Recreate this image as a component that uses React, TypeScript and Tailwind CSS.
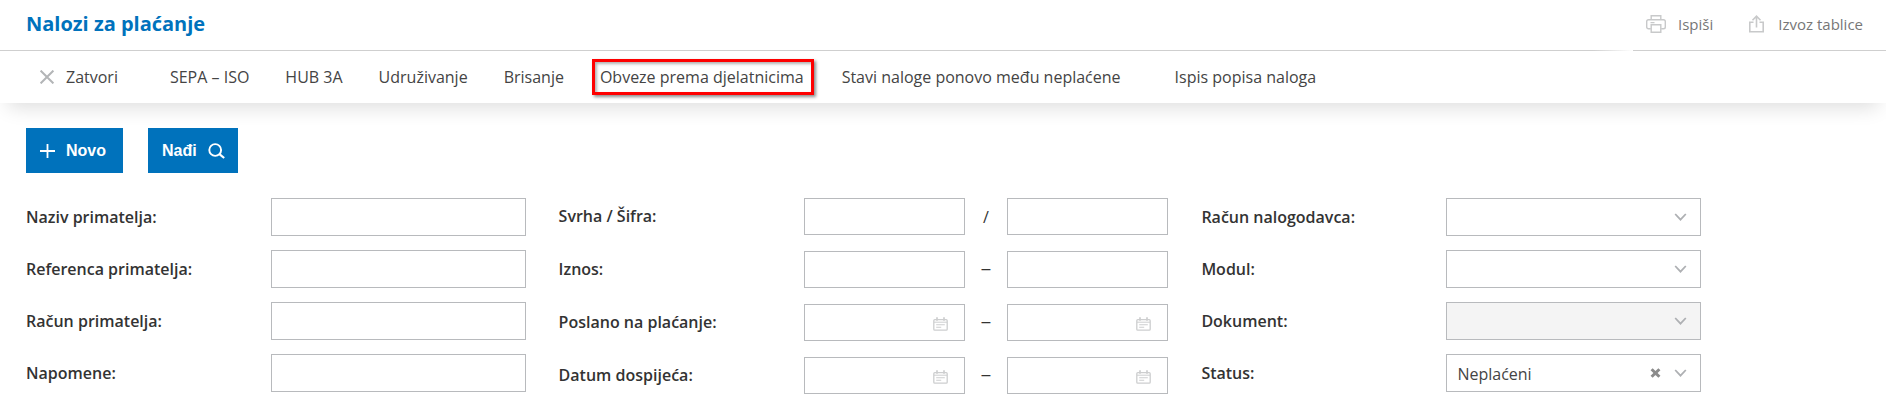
import type { ReactNode } from "react"
import clsx from "clsx"

type FieldProps = {
    id: string
    label: string
    children: ReactNode
}

type ActionProps = {
    label: string
    className?: string
    marked?: boolean
}

const inputClass = "w-full min-w-0 border border-[#b8babd] bg-white px-3 text-base text-[#444] outline-none"

const PrinterIcon = () => (
    <svg width="20" height="18" viewBox="0 0 20 18" fill="none" stroke="#c8c9ca" strokeWidth="1.4">
        <path d="M5.2 4.8V.7h9.6v4.1" />
        <path d="M4.8 13.8H2.5c-1 0-1.8-.8-1.8-1.8V6.6c0-1 .8-1.8 1.8-1.8h15c1 0 1.8.8 1.8 1.8V12c0 1-.8 1.8-1.8 1.8h-2.3" />
        <path d="M5.2 9.7h9.6v7.6H5.2zM4.5 7.6h4" />
    </svg>
)

const ExportIcon = () => (
    <svg width="15" height="18" viewBox="0 0 15 18" fill="none" stroke="#c8c9ca" strokeWidth="1.6">
        <path d="M4.5 7.3H.8v9.5h13.4V7.3h-3.7M7.5 12.5V2M3.5 5.2l4-4 4 4" />
    </svg>
)

const CloseIcon = () => (
    <svg width="14" height="14" viewBox="0 0 14 14" fill="none" stroke="#b3b5b7" strokeWidth="2">
        <path d="m.6.6 12.8 12.8M13.4.6.6 13.4" />
    </svg>
)

const PlusIcon = () => (
    <svg width="15" height="14" viewBox="0 0 15 14" fill="none" stroke="#fff" strokeWidth="1.8">
        <path d="M0 7h15M7.5 0v14" />
    </svg>
)

const SearchIcon = () => (
    <svg width="18" height="16" viewBox="0 0 18 16" fill="none" stroke="#fff" strokeWidth="1.9">
        <circle cx="7.2" cy="7" r="5.9" />
        <path d="m11.4 11.1 4.8 3.9" strokeWidth="2.2" />
    </svg>
)

const CalendarIcon = () => (
    <svg className="pointer-events-none absolute right-[17px] bottom-2.5" width="15" height="14" viewBox="0 0 15 14" fill="none" stroke="#cdcecf">
        <rect x=".8" y="2.7" width="13.4" height="10.5" rx="1" strokeWidth="1.3" />
        <path d="M1 5.2h13" />
        <path d="M4 .3v3.4M11 .3v3.4" strokeWidth="1.7" />
        <path d="M3.2 7.8h8.6M3.2 10.2h5" strokeWidth="1.1" />
    </svg>
)

const ChevronIcon = () => (
    <svg className="pointer-events-none absolute top-1/2 right-3.5 -translate-y-1/2" width="13" height="8" viewBox="0 0 13 8" fill="none" stroke="#aeb0b3" strokeWidth="1.8">
        <path d="m1.2 1 5.3 5.6L11.8 1" />
    </svg>
)

const Action = ({ label, className, marked }: ActionProps) => (
    <button type="button" className={clsx("relative cursor-pointer whitespace-nowrap", className)}>
        {label}
        {marked && <span className="absolute -inset-y-1.5 -right-2.5 -left-2 border-3 border-[#fe0000] shadow-[2px_2px_3px_rgba(0,0,0,0.45),inset_2px_2px_3px_rgba(0,0,0,0.3)]" />}
    </button>
)

const Field = ({ id, label, children }: FieldProps) => (
    <div className="flex items-center">
        <label htmlFor={id} className="w-[245px] shrink-0 pb-px font-semibold">{label}</label>
        {children}
    </div>
)

const TextField = ({ id, label }: { id: string, label: string }) => (
    <Field id={id} label={label}>
        <input id={id} type="text" className={clsx(inputClass, "h-[38px]")} />
    </Field>
)

const RangeField = ({ id, label, separator = "–", date }: { id: string, label: string, separator?: string, date?: boolean }) => (
    <Field id={id} label={label}>
        <div className="relative flex-1">
            <input id={id} type="text" className={clsx(inputClass, "block h-[37px]")} />
            {date && <CalendarIcon />}
        </div>
        <span className={clsx("w-[42px] text-center", separator === "–" && "pb-0.5 font-['Liberation_Sans',sans-serif]")}>{separator}</span>
        <div className="relative flex-1">
            <input aria-label={label} type="text" className={clsx(inputClass, "block h-[37px]")} />
            {date && <CalendarIcon />}
        </div>
    </Field>
)

const SelectField = ({ id, label, value, disabled }: { id: string, label: string, value?: string, disabled?: boolean }) => (
    <Field id={id} label={label}>
        <div className="relative flex-1">
            <select id={id} disabled={disabled} className={clsx(inputClass, "block h-[38px] appearance-none pt-0.5 pl-2.5 disabled:bg-[#f4f4f4] disabled:opacity-100")}>
                <option>{value}</option>
            </select>
            {value && (
                <button type="button" aria-label="Ukloni" className="absolute top-1/2 right-10 -translate-y-1/2">
                    <svg width="11" height="10" viewBox="0 0 11 10" stroke="#8b8b8b" strokeWidth="3">
                        <path d="m1.6 1.2 7.8 7.6M9.4 1.2 1.6 8.8" />
                    </svg>
                </button>
            )}
            <ChevronIcon />
        </div>
    </Field>
)

const App = () => {
    return (
        <div className="min-h-screen bg-white font-['Open_Sans',sans-serif] text-base text-[#333]">
            <header className="flex h-[50px] items-center justify-between pr-[23px] pl-[26px]">
                <h1 className="pb-0.5 text-xl font-bold text-[#0072bc]">Nalozi za plaćanje</h1>
                <div className="flex items-center gap-9 pb-0.5 text-[15px] text-[#777]">
                    <button type="button" className="flex cursor-pointer items-center gap-3">
                        <PrinterIcon />
                        Ispiši
                    </button>
                    <button type="button" className="flex cursor-pointer items-center gap-3.5">
                        <ExportIcon />
                        Izvoz tablice
                    </button>
                </div>
            </header>
            <div className="flex h-px">
                <div className="flex-1 bg-[#cfcfcf]" />
                <div className="w-10 bg-linear-to-r from-[#cfcfcf] to-white" />
                <div className="w-[253px] bg-[#cfcfcf]" />
            </div>
            <nav className="flex h-[52px] items-center gap-9 pl-10 text-[#444] shadow-[0_12px_20px_-8px_rgba(0,0,0,0.14)]">
                <button type="button" className="flex cursor-pointer items-center gap-3">
                    <CloseIcon />
                    Zatvori
                </button>
                <Action label="SEPA – ISO" className="ml-4" />
                <Action label="HUB 3A" />
                <Action label="Udruživanje" />
                <Action label="Brisanje" />
                <Action label="Obveze prema djelatnicima" className="mr-0.5" marked />
                <Action label="Stavi naloge ponovo među neplaćene" className="mr-0.5" />
                <Action label="Ispis popisa naloga" className="ml-4" />
            </nav>
            <main className="pt-[25px] pr-[185px] pl-[26px]">
                <div className="flex gap-[25px] font-['Liberation_Sans',sans-serif] font-bold text-white">
                    <button type="button" className="flex h-[45px] cursor-pointer items-center gap-[11px] bg-[#0072bc] pr-[17px] pl-3.5">
                        <PlusIcon />
                        Novo
                    </button>
                    <button type="button" className="flex h-[45px] cursor-pointer items-center gap-[11px] bg-[#0072bc] pr-3 pl-3.5">
                        Nađi
                        <SearchIcon />
                    </button>
                </div>
                <form className="mt-[25px] grid grid-cols-[499fr_609fr_499fr] items-start gap-x-[33px]">
                    <div className="flex flex-col gap-3.5">
                        <TextField id="naziv" label="Naziv primatelja:" />
                        <TextField id="referenca" label="Referenca primatelja:" />
                        <TextField id="racun" label="Račun primatelja:" />
                        <TextField id="napomene" label="Napomene:" />
                    </div>
                    <div className="flex flex-col gap-4">
                        <RangeField id="svrha" label="Svrha / Šifra:" separator="/" />
                        <RangeField id="iznos" label="Iznos:" />
                        <RangeField id="poslano" label="Poslano na plaćanje:" date />
                        <RangeField id="dospijece" label="Datum dospijeća:" date />
                    </div>
                    <div className="flex flex-col gap-3.5">
                        <SelectField id="nalogodavac" label="Račun nalogodavca:" />
                        <SelectField id="modul" label="Modul:" />
                        <SelectField id="dokument" label="Dokument:" disabled />
                        <SelectField id="status" label="Status:" value="Neplaćeni" />
                    </div>
                </form>
            </main>
        </div>
    )
}

export default App
